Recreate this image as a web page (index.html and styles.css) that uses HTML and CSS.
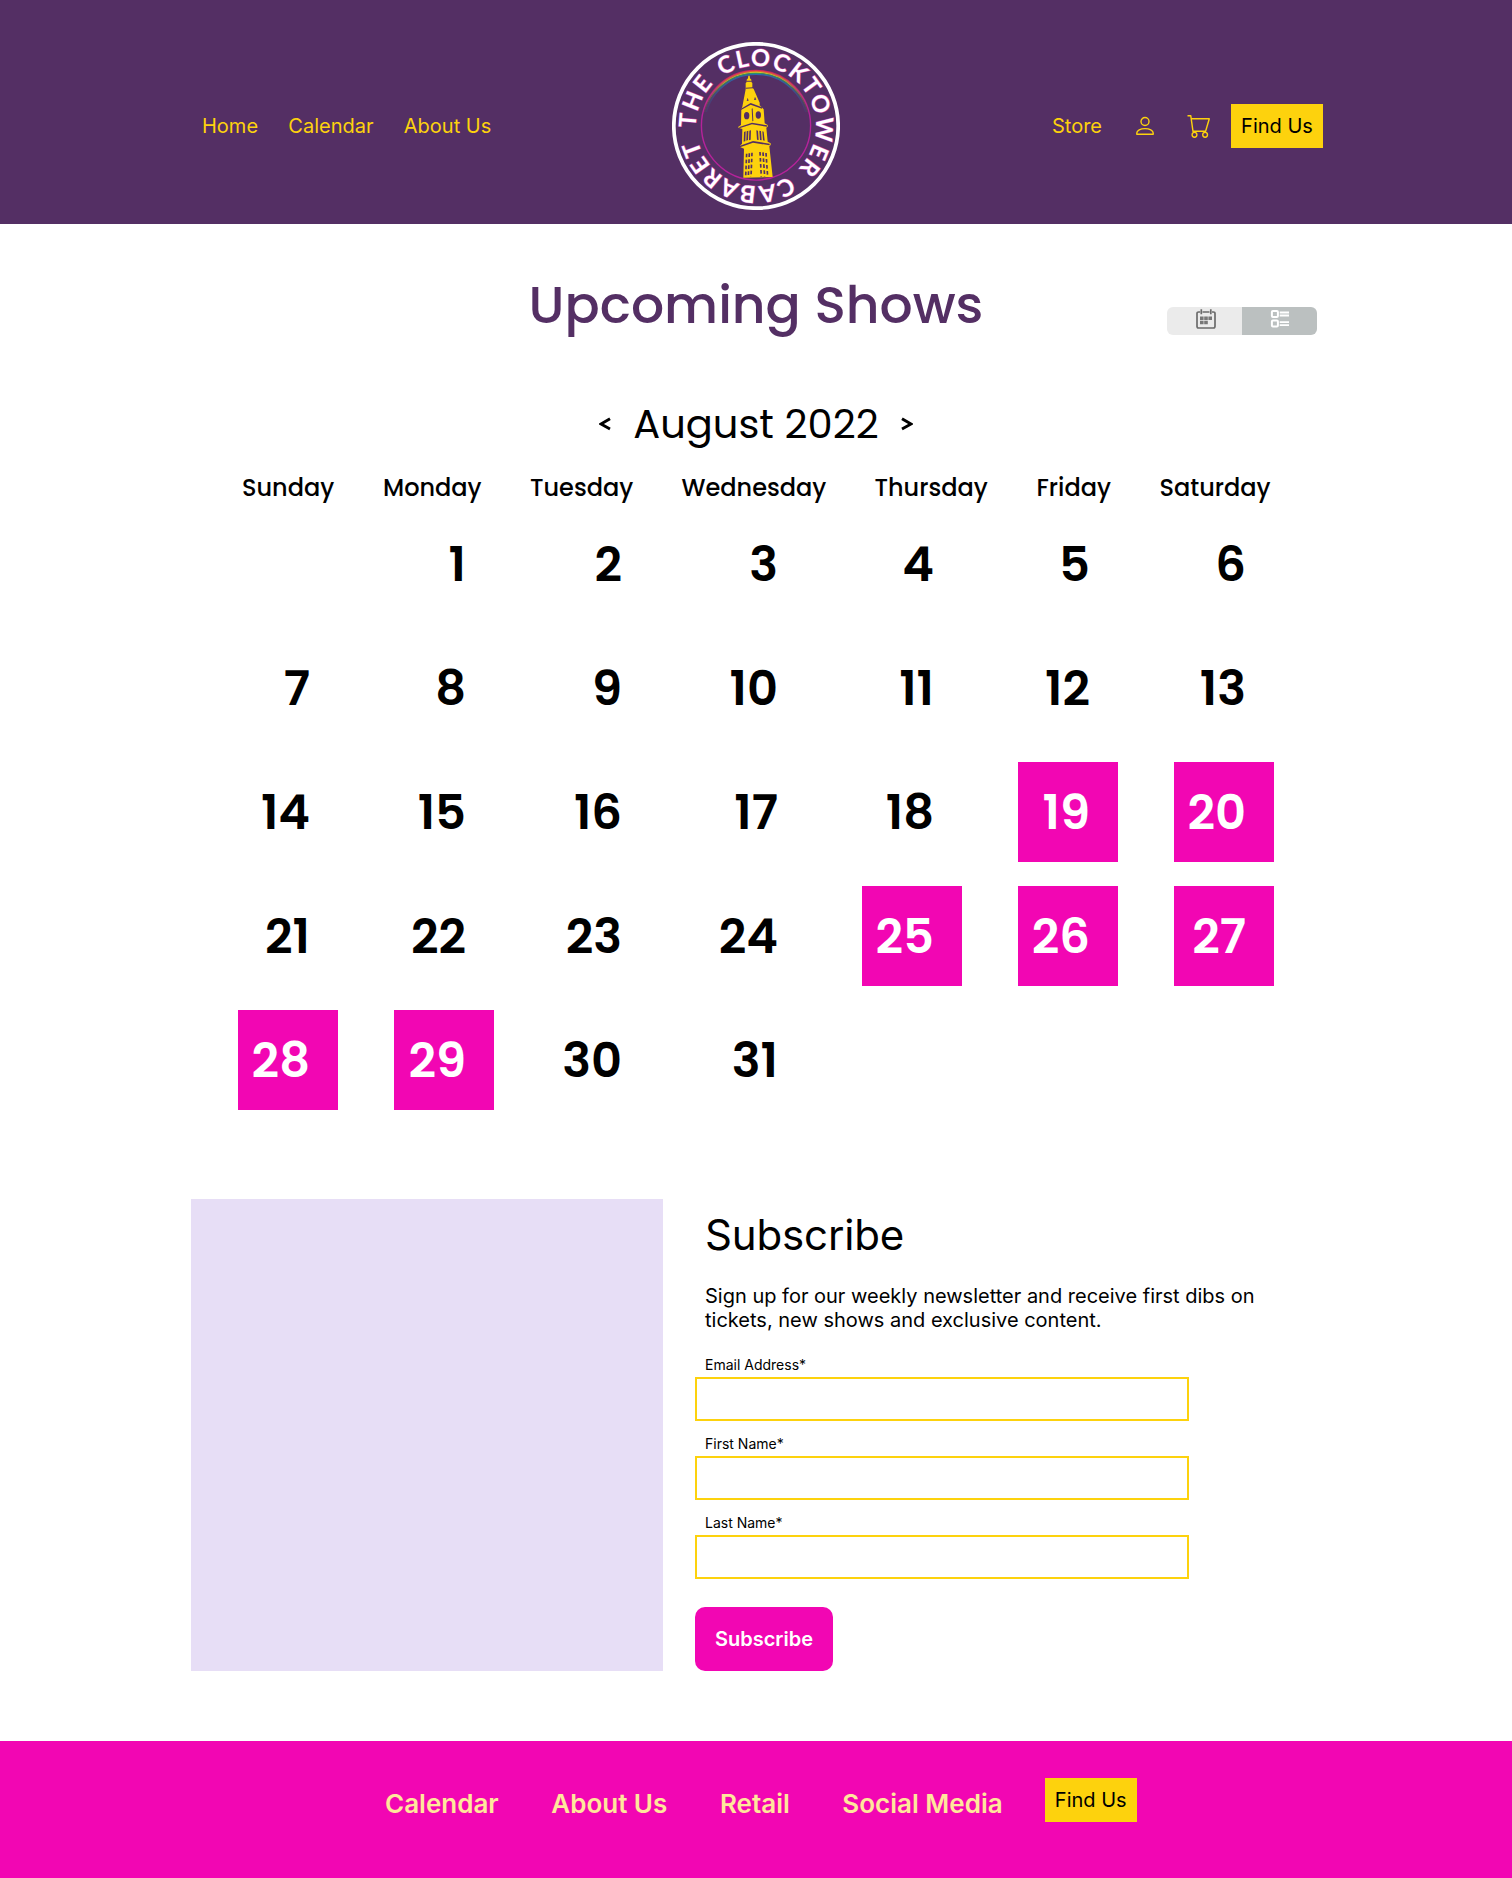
FILE: index.html
```html
<!DOCTYPE html>
<html lang="en">
<head>
<meta charset="utf-8">
<title>The Clocktower Cabaret</title>
<link rel="stylesheet" href="styles.css">
</head>
<body>
<header class="site-header">
  <nav class="nav-left">
    <a class="nav-link">Home</a>
    <a class="nav-link">Calendar</a>
    <a class="nav-link">About Us</a>
  </nav>
  <svg class="logo" viewBox="0 0 168 168" width="168" height="168">
    <defs>
      <path id="ring" d="M24.91 94.42A60 60 0 0 1 143.09 73.58A60 60 0 0 1 24.91 94.42"/>
      <linearGradient id="fade" x1="0" x2="1" y1="0" y2="0">
        <stop offset="0" stop-color="#000"/><stop offset=".2" stop-color="#bbb"/><stop offset=".5" stop-color="#fff"/><stop offset=".8" stop-color="#bbb"/><stop offset="1" stop-color="#000"/>
      </linearGradient>
      <mask id="bow" maskUnits="userSpaceOnUse" x="26" y="20" width="116" height="60"><rect x="30" y="20" width="108" height="50" fill="url(#fade)"/></mask>
    </defs>
    <circle cx="84" cy="84" r="82.2" fill="none" stroke="#fff" stroke-width="3.7"/>
    <circle cx="84" cy="83.5" r="54.6" fill="none" stroke="#b5239a" stroke-width="1.4"/>
    <g mask="url(#bow)" fill="none" stroke-width="1.2">
      <circle cx="84" cy="83.5" r="55.2" stroke="#d8265c"/>
      <circle cx="84" cy="83.5" r="54.2" stroke="#e8642a"/>
      <circle cx="84" cy="83.5" r="53.2" stroke="#d8c32c"/>
      <circle cx="84" cy="83.5" r="52.2" stroke="#2f9c5a"/>
      <circle cx="84" cy="83.5" r="51.2" stroke="#2b6cb0"/>
    </g>
    <text class="logo-text"><textPath href="#ring" startOffset="8.5" textLength="364">THE CLOCKTOWER CABARET</textPath></text>
    <g transform="scale(.33333) translate(-36 -36)">
      <path fill="#fdd20d" d="M265 137H269L270 145L274 149V156L277 159V173L281 177L299 218V226L311 238L314 280L323 285V290L319 293L323 335L332 340V345L328 349L338 441L250 443L252 356L240 351V347L246 341L247 297L235 293V290L243 285L244 238L247 230L257 178V160L260 156V149L264 145Z"/>
      <g fill="#542f64">
        <ellipse cx="260" cy="257" rx="8" ry="11"/><ellipse cx="295" cy="255" rx="8" ry="11"/>
        <path d="M259 152h16v3h-16zM257 173l22-1v3l-22 1zM260 213l3-10 3 9zM282 210l3-10 4 9zM243 236l29-17 34 13v4l-34-12-29 16zM238 291l38-13 45 8v4l-45-7-38 12zM240 347l39-14 50 8v5l-50-8-39 14zM275 236l3-1 2 38-3 1z"/>
        <path d="M252 306l5-2-1 29-5 2zM260 304l5-2-1 28-5 2zM268 302l5-1-1 28-5 2zM289 301l5 1 2 28-5-1zM298 302l5 1 2 28-5-1zM307 304l4 1 3 27-5-1z"/>
      </g>
      <g fill="none" stroke="#542f64" stroke-width="5" stroke-dasharray="11 7">
        <path d="M260 371l-3 69M268 370l-3 70M276 368l-3 72M300 366l4 74M309 367l5 73M318 369l5 71"/>
      </g>
    </g>
  </svg>
  <div class="nav-right">
    <a class="nav-link">Store</a>
    <svg class="icon-user" width="20" height="20" viewBox="0 0 20 20" fill="none" stroke="#fdd20d" stroke-width="1.4"><circle cx="10" cy="5.5" r="4"/><path d="M1.800 18.300v-1.200C1.800 14.400 5.500 12.600 10 12.600s8.200 1.800 8.200 4.500v1.200z" stroke-linejoin="round"/></svg>
    <svg class="icon-cart" width="24" height="24" viewBox="0 0 24 24" fill="none" stroke="#fdd20d" stroke-width="1.4"><path d="M.5 1.800h3.300L6 17.300h12.600l3.700-12.500H4.300" stroke-linejoin="round"/><circle cx="7.500" cy="20.800" r="2.400"/><circle cx="18.100" cy="20.800" r="2.400"/></svg>
    <a class="find-us">Find Us</a>
  </div>
</header>

<main>
  <div class="title-row">
    <h1 class="title">Upcoming Shows</h1>
    <div class="view-toggle">
      <span class="toggle-half">
        <svg width="20" height="20" viewBox="0 0 20 20"><path d="M4.200 3H2.600Q1 3 1 4.600V17.300Q1 19 2.600 19H17.300Q19 19 19 17.300V4.600Q19 3 17.400 3H16M6.500 3h7" fill="none" stroke="#6b6b6b" stroke-width="1.700"/><path d="M5.300 .3v5M14.800 .3v5" stroke="#6b6b6b" stroke-width="1.700"/><path fill="#777" d="M4 7.500h3.600v3.600H4zM8.200 7.500h3.600v3.600H8.200zM12.400 7.500H16v3.600h-3.600zM4 11.700h3.600v3.600H4zM8.200 11.700h3.600v3.600H8.200z"/></svg>
      </span>
      <span class="toggle-half toggle-active">
        <svg width="20" height="20" viewBox="0 0 20 20" fill="none" stroke="#fff" stroke-width="2"><rect x="1.900" y="1.900" width="6" height="6" rx="1"/><rect x="1.900" y="11.600" width="6" height="6" rx="1"/><path d="M9.700 3.500h9.300M9.700 6.500h9.300M9.700 13.200h9.300M9.700 16.200h9.300" stroke-width="1.800"/></svg>
      </span>
    </div>
  </div>
  <div class="month-row">
    <svg width="12" height="14" viewBox="0 0 12 14"><path d="M11 1.700L2 7l9 5" fill="none" stroke="#000" stroke-width="2.900"/></svg>
    <h2 class="month">August 2022</h2>
    <svg width="12" height="14" viewBox="0 0 12 14"><path d="M1 1.700L10 7l-9 5" fill="none" stroke="#000" stroke-width="2.900"/></svg>
  </div>
  <div class="weekdays">
    <span>Sunday</span><span>Monday</span><span>Tuesday</span><span>Wednesday</span><span>Thursday</span><span>Friday</span><span>Saturday</span>
  </div>
  <div class="days">
    <span class="day"></span><span class="day">1</span><span class="day">2</span><span class="day">3</span><span class="day">4</span><span class="day">5</span><span class="day">6</span>
    <span class="day">7</span><span class="day">8</span><span class="day">9</span><span class="day">10</span><span class="day">11</span><span class="day">12</span><span class="day">13</span>
    <span class="day">14</span><span class="day">15</span><span class="day">16</span><span class="day">17</span><span class="day">18</span><span class="day show">19</span><span class="day show">20</span>
    <span class="day">21</span><span class="day">22</span><span class="day">23</span><span class="day">24</span><span class="day show">25</span><span class="day show">26</span><span class="day show">27</span>
    <span class="day show">28</span><span class="day show">29</span><span class="day">30</span><span class="day">31</span>
  </div>
  <section class="signup">
    <div class="signup-image"></div>
    <form class="signup-form">
      <h2 class="signup-title">Subscribe</h2>
      <p class="signup-text">Sign up for our weekly newsletter and receive first dibs on tickets, new shows and exclusive content.</p>
      <label class="field">Email Address*<input class="field-input" type="text"></label>
      <label class="field">First Name*<input class="field-input" type="text"></label>
      <label class="field">Last Name*<input class="field-input" type="text"></label>
      <button class="signup-button" type="button">Subscribe</button>
    </form>
  </section>
</main>

<footer class="site-footer">
  <a class="footer-link">Calendar</a>
  <a class="footer-link">About Us</a>
  <a class="footer-link">Retail</a>
  <a class="footer-link">Social Media</a>
  <a class="find-us">Find Us</a>
</footer>
</body>
</html>
```
FILE: styles.css
```css
* { box-sizing: border-box; }
body { margin: 0; background: #fff; color: #000; font-family: Inter, sans-serif; }
h1, h2, p { margin: 0; }

.site-header {
  height: 224px;
  padding: 28px 189px 0 202px;
  background: #542f64;
  display: grid;
  grid-template-columns: 470px 168px 1fr;
  align-items: center;
}
.nav-left { display: flex; gap: 30.3px; }
.nav-link { font-size: 20px; line-height: 24px; color: #fdd20d; }
.logo { display: block; }
.logo-text { font-family: Lato, sans-serif; font-size: 23.5px; font-weight: 700; word-spacing: 3px; fill: #fff; stroke: #c63fae; stroke-width: 1px; paint-order: stroke; }
.nav-right { display: flex; align-items: center; justify-content: flex-end; }
.icon-user { margin-left: 33px; }
.icon-cart { margin: 0 20px 0 32px; }
.find-us {
  width: 92px; height: 44px; line-height: 44px;
  background: #fdd20d; color: #000; font-size: 20px; text-align: center;
}

.title, .month, .weekdays, .days { font-family: Poppins, Inter, sans-serif; }
.title-row {
  padding-top: 43px;
  height: 150px;
  display: grid;
  grid-template-columns: 345px 822px 150px;
  align-items: start;
}
.title { grid-column: 2; text-align: center; font-size: 52px; line-height: 75px; font-weight: 500; color: #542f64; }
.view-toggle { display: flex; height: 28px; margin-top: 40px; border-radius: 6px; overflow: hidden; }
.toggle-half { width: 75px; padding-top: 2px; background: #ebebeb; text-align: center; }
.toggle-active { background: #bbc0c0; }
.toggle-half svg { display: block; margin: 0 auto; }
.toggle-half:first-child svg { margin-left: 29px; }

.month-row { display: flex; justify-content: center; align-items: center; gap: 22px; height: 60px; margin-top: 20px; }
.month { font-size: 40px; line-height: 58px; font-weight: 400; }
.weekdays {
  display: grid;
  grid-template-columns: 141px 147px 151.500px 193px 162px 123px 112px;
  margin: 16px 0 0 242px;
  font-size: 24px; line-height: 36px; font-weight: 500;
}
.days {
  display: grid;
  grid-template-columns: repeat(7, 100px);
  grid-auto-rows: 100px;
  gap: 24px 56px;
  margin: 8px 0 0 238px;
}
.day { padding-right: 28px; text-align: right; font-size: 48px; line-height: 101px; font-weight: 600; }
.show { background: #f206b3; color: #fff; }

.signup { display: flex; gap: 32px; margin: 89px 0 70px 191px; }
.signup-image { width: 472px; height: 472px; background: #e7def6; }
.signup-form { width: 600px; display: flex; flex-direction: column; align-items: flex-start; }
.signup-title { margin: 10px 0 0 10px; font-size: 42px; line-height: 52px; font-weight: 400; letter-spacing: -.15px; }
.signup-text { width: 570px; margin: 23px 0 24px 10px; font-size: 20px; line-height: 24px; }
.field { display: flex; flex-direction: column; gap: 4px; padding-left: 10px; margin-bottom: 14px; font-size: 14px; line-height: 17px; }
.field-input { width: 494px; height: 44px; margin-left: -10px; padding: 0 10px; border: 2px solid #fdd20d; background: #fff; outline: none; }
.signup-button { width: 138px; height: 64px; margin-top: 14px; border: 0; border-radius: 10px; background: #f206b3; color: #fff; font: 600 20px/24px Inter, sans-serif; }

.site-footer { display: flex; height: 137px; padding: 37px 0 0 385px; background: #f206b3; }
.footer-link { margin-right: 52.600px; font-size: 26px; line-height: 52px; font-weight: 600; color: #ffe79b; }
.site-footer .find-us { margin-left: -10.500px; }
```
